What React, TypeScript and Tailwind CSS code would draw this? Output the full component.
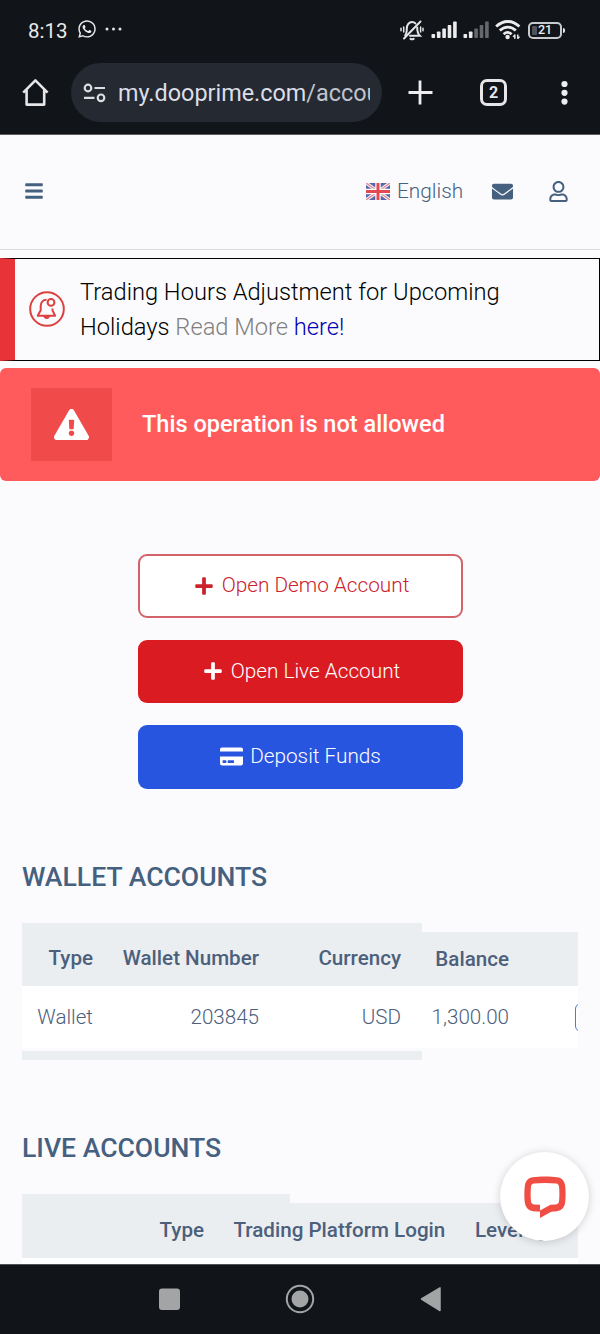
import React from 'react';
import {
  FaBars,
  FaCreditCard,
  FaEnvelope,
  FaExclamationTriangle,
  FaPlus,
  FaRegUser,
  FaWhatsapp
} from 'react-icons/fa';

const SignalBars = ({ active }: { active: number }) => (
  <svg width="26" height="18" viewBox="0 0 26 18">
    {[4, 6.5, 9.5, 13, 16.5].map((h, i) => (
      <rect
        key={i}
        x={0.5 + i * 5.4}
        y={17 - h}
        width="3.6"
        height={h}
        rx="0.8"
        fill={i < active ? '#ececee' : '#66686c'}
      />
    ))}
  </svg>
);

const MutedBell = () => (
  <svg width="24" height="21" viewBox="0 0 24 21" fill="none" stroke="#e4e5e7" strokeWidth="2" strokeLinecap="round">
    <path d="M5.2 15.2C6.6 13.8 6.8 12 6.8 8.5 6.8 5 9 2 12 2c1.4 0 2.6.5 3.4 1.4M17.2 7.5c0 4 .4 6.2 2.6 8.2H10" />
    <path d="M20.5 1.5 4 18.5" />
    <path d="M10.5 18.8c1 .6 2.2.6 3.2 0" />
    <path d="M3.7 7v5M1 8.3v2.4M20.6 7v5M23 8.3v2.4" strokeWidth="1.5" />
  </svg>
);

const Wifi = () => (
  <svg width="26" height="20" viewBox="0 0 26 20" fill="none" stroke="#ececee" strokeWidth="2.8">
    <path d="M1.2 6.6C8-.2 17.6-.2 24.4 6.6" />
    <path d="M4.8 10.6c4.8-4.6 11.2-4.6 16 0" />
    <path d="M8.6 14.2c2.5-2.3 5.5-2.3 8 0" />
    <circle cx="12.6" cy="17" r="2.2" fill="#ececee" stroke="none" />
    <path d="M19.8 14.6v4.2M22.8 14.6v4.2" strokeWidth="1.5" />
    <path d="m18 16.9 1.8-2M24.6 16.7l-1.8 2" strokeWidth="1.2" />
  </svg>
);

const Battery = () => (
  <div className="flex items-center">
    <div className="relative flex h-[17px] w-[34px] items-center justify-center rounded-[5px] border-2 border-[#c9cacd]">
      <span className="absolute left-[2px] top-[2px] h-[9px] w-[5px] rounded-[1px] bg-[#515357]" />
      <span className="relative pt-px text-[12.5px] font-medium leading-none text-[#ececee]">21</span>
    </div>
    <span className="ml-px h-[5px] w-[2px] rounded-r bg-[#ececee]" />
  </div>
);

const StatusBar = () => (
  <div className="flex h-[60px] items-center justify-between pl-7 pr-[35px] text-[#e8e9eb]">
    <div className="flex items-center">
      <span className="w-[49px] pt-px text-[20.5px] leading-6">8:13</span>
      <FaWhatsapp className="-mt-0.5 size-[20px]" />
      <svg className="-mt-0.5 ml-2" width="18" height="4" viewBox="0 0 18 4" fill="#e4e5e7">
        <circle cx="2" cy="2" r="1.5" />
        <circle cx="8.5" cy="2" r="1.5" />
        <circle cx="15" cy="2" r="1.5" />
      </svg>
    </div>
    <div className="flex items-center">
      <MutedBell />
      <div className="ml-[7px]"><SignalBars active={5} /></div>
      <div className="ml-[6px]"><SignalBars active={2} /></div>
      <div className="ml-[6px]"><Wifi /></div>
      <div className="ml-[7px]"><Battery /></div>
    </div>
  </div>
);

const BrowserBar = () => (
  <div className="flex h-[75px] items-start border-b border-[#5a5c60] pt-[3px]">
    <svg className="ml-[22px] mt-[15px]" width="27" height="29" viewBox="0 0 27 29" fill="none" stroke="#e6e6e8" strokeWidth="2.6">
      <path d="M1.2 14.6 13.4 2.4l12.2 12.2M4.6 12v14.6h17.6V12" strokeLinejoin="round" />
    </svg>
    <div className="ml-[22px] flex h-[59px] w-[311px] items-center rounded-full bg-[#242932] pl-[12px]">
      <svg width="24" height="20" viewBox="0 0 24 20" fill="none" stroke="#dcdde3" strokeWidth="2.2">
        <circle cx="5" cy="5" r="3.3" />
        <path d="M11.5 5H22M1 14.8h10.5" />
        <circle cx="18" cy="14.8" r="3.3" />
      </svg>
      <div className="ml-[11px] w-[252px] overflow-hidden whitespace-nowrap text-[23.4px] leading-8 text-[#dcdee8]">
        my.dooprime.com<span className="text-[#c0c3ce]">/accou</span>
      </div>
    </div>
    <svg className="ml-[26px] mt-[17px]" width="25" height="25" viewBox="0 0 25 25" stroke="#eeeef0" strokeWidth="2.8">
      <path d="M12 .5v24M.5 12.5h24" />
    </svg>
    <div className="ml-[47px] mt-4 flex size-[27px] items-center justify-center rounded-[7px] border-[3px] border-[#e6e6e8] text-[16px] font-bold leading-none text-[#e6e6e8]">
      2
    </div>
    <svg className="ml-[54px] mt-[17px]" width="7" height="26" viewBox="0 0 7 26" fill="#eeeef0">
      <circle cx="3.5" cy="4" r="3.1" />
      <circle cx="3.5" cy="12.8" r="3.1" />
      <circle cx="3.5" cy="21.6" r="3.1" />
    </svg>
  </div>
);

const Flag = () => (
  <svg width="24" height="17" viewBox="0 0 24 17">
    <rect width="24" height="17" fill="#5967a8" />
    <path d="m0 0 24 17M24 0 0 17" stroke="#f3eef4" strokeWidth="3.4" />
    <path d="m0 0 24 17M24 0 0 17" stroke="#e58591" strokeWidth="1.2" />
    <path d="M12 0v17M0 8.5h24" stroke="#fff" strokeWidth="5.4" />
    <path d="M12 0v17M0 8.5h24" stroke="#e54950" strokeWidth="3" />
  </svg>
);

const SiteHeader = () => (
  <header className="flex h-[115px] items-center border-b border-[#dddee0] pb-[2px] text-[#46607f]">
    <FaBars className="ml-[24px] size-[20px]" />
    <div className="ml-[322px] flex w-[126px] items-center">
      <Flag />
      <span className="ml-[7px] text-[20.8px] font-light leading-6">English</span>
    </div>
    <FaEnvelope className="size-[21px]" />
    <FaRegUser className="ml-[35px] size-[21px]" />
  </header>
);

const NoticeIcon = () => (
  <svg width="36" height="36" viewBox="0 0 36 36" fill="none" stroke="#de4040" strokeWidth="2">
    <circle cx="18" cy="18" r="16.8" />
    <path d="M17.6 8.8c-3.8 0-5.9 2.7-5.9 6.2v4.2l-3 5.6h17.4l-2.6-5.4v-1.8" strokeLinejoin="round" />
    <circle cx="22" cy="11.4" r="3.4" />
    <path d="M14.6 25.4c1.2 2.8 5 2.8 6.2 0Z" fill="#de4040" strokeWidth="1" />
  </svg>
);

const Notice = () => (
  <div className="mt-[8px] flex h-[103px] items-center border border-l-[15px] border-black border-l-[#e83438] pb-px pl-[14px]">
    <NoticeIcon />
    <p className="ml-[15px] whitespace-nowrap pt-[2px] text-[23.68px] font-light leading-[35px] text-black">
      Trading Hours Adjustment for Upcoming
      <br />
      Holidays <span className="text-[#808080]">Read More</span>{' '}
      <a className="text-[#0000b4]">here!</a>
    </p>
  </div>
);

const Alert = () => (
  <div className="mt-[7px] flex h-[113px] items-center rounded-[6px] bg-[#ff5b5c] pl-[31px] text-white">
    <div className="flex h-[73px] w-[81px] items-center justify-center bg-[#f04a4a]">
      <FaExclamationTriangle className="size-[35px]" />
    </div>
    <span className="ml-[30px] pb-[2px] text-[23.55px] font-medium leading-8">This operation is not allowed</span>
  </div>
);

const actionClass = 'flex h-[63.5px] w-[325px] items-center justify-center rounded-[9px] text-[20.75px] font-light';

const Actions = () => (
  <div className="mt-[73px] flex flex-col items-center gap-[22px] pl-px">
    <button className={`${actionClass} gap-[8px] border-2 border-[#d4626a] bg-white pl-0.5 text-[#ca212c]`}>
      <FaPlus className="size-[20px]" />
      Open Demo Account
    </button>
    <button className={`${actionClass} gap-[8px] bg-[#da1c22] pl-0.5 text-white`}>
      <FaPlus className="size-[20px]" />
      Open Live Account
    </button>
    <button className={`${actionClass} gap-[7px] bg-[#2855e0] text-white`}>
      <FaCreditCard className="size-[23px]" />
      Deposit Funds
    </button>
  </div>
);

const SectionTitle = ({ children }: { children: React.ReactNode }) => (
  <h2 className="pl-[22px] text-[26.6px] font-medium leading-8 text-[#46607f]">{children}</h2>
);

const WalletTable = () => (
  <div className="mx-[22px] mt-[29.5px] flex items-start overflow-hidden whitespace-nowrap text-right text-[20.6px] text-[#4c607c]">
    {/* pinned columns sit taller than the scrolling ones */}
    <div className="w-[400px] shrink-0">
      <div className="grid h-[63.5px] grid-cols-[71px_166px_142px] items-center bg-[#ebeef1] pt-[9px] font-medium">
        <span>Type</span>
        <span>Wallet Number</span>
        <span>Currency</span>
      </div>
      <div className="grid h-[62px] grid-cols-[71px_166px_142px] items-center bg-white font-light">
        <span>Wallet</span>
        <span>203845</span>
        <span>USD</span>
      </div>
      <div className="mt-[3px] h-[9px] bg-[#ebeef1]" />
    </div>
    <div className="mt-[9.5px] w-[156px] shrink-0">
      <div className="flex h-[54px] items-center bg-[#ebeef1]">
        <span className="w-[87px] font-medium">Balance</span>
      </div>
      <div className="flex h-[62px] items-center overflow-hidden bg-white">
        <span className="w-[87px] shrink-0 font-light">1,300.00</span>
        <span className="ml-[66px] h-[29px] w-[60px] shrink-0 rounded-[6px] border border-[#3b82d6]" />
      </div>
    </div>
  </div>
);

const LiveTable = () => (
  <div className="mx-[22px] mt-[30px] flex items-start overflow-hidden whitespace-nowrap text-[20.6px] font-medium text-[#4c607c]">
    {/* the login heading runs past the pinned column, so it stays on top */}
    <div className="relative z-10 w-[268px] shrink-0">
      <div className="flex h-[64px] items-center bg-[#ebeef1] pt-[8px]">
        <span className="w-[182px] shrink-0 text-right">Type</span>
        <span className="ml-[29.5px] w-[56px]">Trading Platform Login</span>
      </div>
      <div className="h-[7px] bg-white" />
    </div>
    <div className="mt-[9px] w-[288px] shrink-0">
      <div className="flex h-[55px] items-center bg-[#ebeef1] pl-[185px]">
        <span>Leverage</span>
      </div>
      <div className="h-[7px] bg-white" />
    </div>
  </div>
);

const ChatButton = () => (
  <button className="absolute left-[500px] top-[1152px] z-20 flex size-[89px] items-center justify-center rounded-full bg-white shadow-[0_1px_8px_rgba(0,0,0,0.18)]">
    <svg width="42" height="42" viewBox="0 0 42 42">
      <path
        fill="#f04e45"
        fillRule="evenodd"
        d="M9 1.2C15 .3 27 .3 33 1.2c4.6.6 7.5 3.5 8.1 8.1.7 5 .7 13 0 17.5-.6 4.7-3.5 8-8.1 8.4-3 .3-5 .4-6.2.8L16 42v-6.5c-2.500 0-4.500-.1-7-.3-4.600-.4-7.500-3.700-8.100-8.400-.7-4.500-.7-12.500 0-17.500C1.500 4.700 4.400 1.800 9 1.200ZM10 7.500c7-.8 15-.8 22 0 1.800.2 2.800 1.200 3 3 .5 5 .5 10 0 14.800-.2 2-1.200 2.900-3 3.100l-5.500.4L16 34.500v-5.700l-6-.4c-1.800-.2-2.800-1.100-3-3.100-.5-4.800-.5-9.800 0-14.800.2-1.800 1.200-2.800 3-3Z"
      />
    </svg>
  </button>
);

const NavBar = () => (
  <div className="h-[70px] border-t border-[#505256] bg-[#111418]">
    <svg className="block" width="600" height="69" viewBox="0 0 600 69">
      <rect x="159" y="23.5" width="21" height="21.5" rx="3" fill="#a3a4a6" />
      <circle cx="300" cy="34" r="13.2" fill="none" stroke="#a3a4a6" strokeWidth="2" />
      <circle cx="300" cy="34" r="8.5" fill="#a3a4a6" />
      <path d="M421.5 34 440 22.8v22.7Z" fill="#a3a4a6" stroke="#a3a4a6" strokeWidth="1.5" strokeLinejoin="round" />
    </svg>
  </div>
);

const App = () => (
  <div className="relative flex h-[1334px] w-[600px] flex-col overflow-hidden bg-[#fbfbfd] font-['Roboto',sans-serif]">
    <div className="bg-[#111418]">
      <StatusBar />
      <BrowserBar />
    </div>
    <main className="h-[1129px] overflow-hidden">
      <SiteHeader />
      <Notice />
      <Alert />
      <Actions />
      <div className="mt-[72.5px]">
        <SectionTitle>WALLET ACCOUNTS</SectionTitle>
        <WalletTable />
      </div>
      <div className="mt-[72px]">
        <SectionTitle>LIVE ACCOUNTS</SectionTitle>
        <LiveTable />
      </div>
    </main>
    <NavBar />
    <ChatButton />
  </div>
);

export default App;
